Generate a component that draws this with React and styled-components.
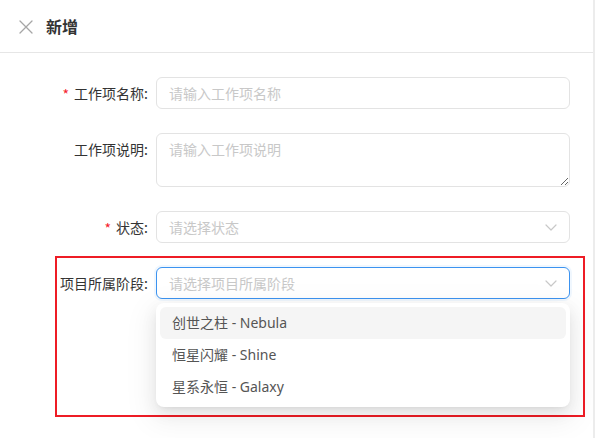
import React from "react";
import styled, { createGlobalStyle, css } from "styled-components";

const GlobalStyle = createGlobalStyle`
  html, body {
    margin: 0;
    padding: 0;
    background: #ffffff;
  }
  body {
    font-family: "Noto Sans", "Noto Sans CJK SC", sans-serif;
    color: #333333;
  }
`;

const phases = [
  { id: "nebula", label: "创世之柱 - Nebula", active: true },
  { id: "shine", label: "恒星闪耀 - Shine" },
  { id: "galaxy", label: "星系永恒 - Galaxy" },
];

const CloseIcon = () => (
  <svg width="14" height="14" viewBox="0 0 14 14" fill="none">
    <path d="M1 1L13 13M13 1L1 13" stroke="#a6a6a6" strokeWidth="1.3" strokeLinecap="round" />
  </svg>
);

const Chevron = () => (
  <svg width="12" height="7" viewBox="0 0 12 7" fill="none">
    <path d="M1 1l5 5 5-5" stroke="#c8c8c8" strokeWidth="1.2" strokeLinecap="round" strokeLinejoin="round" />
  </svg>
);

const App = () => {
  return (
    <>
      <GlobalStyle />
      <Panel>
        <Header>
          <CloseButton>
            <CloseIcon />
          </CloseButton>
          <Title>新增</Title>
        </Header>

        <Form>
          <Row>
            <Label required>工作项名称:</Label>
            <Input placeholder="请输入工作项名称" />
          </Row>
          <Row>
            <Label>工作项说明:</Label>
            <TextArea placeholder="请输入工作项说明" />
          </Row>
          <Row>
            <Label required>状态:</Label>
            <Select>
              <Placeholder>请选择状态</Placeholder>
              <Chevron />
            </Select>
          </Row>
          <Highlighted>
            <Row>
              <Label>项目所属阶段:</Label>
              <SelectWrap>
                <Select focused>
                  <Placeholder>请选择项目所属阶段</Placeholder>
                  <Chevron />
                </Select>
                <Dropdown>
                  {phases.map((p) => (
                    <Option key={p.id} active={p.active}>
                      {p.label}
                    </Option>
                  ))}
                </Dropdown>
              </SelectWrap>
            </Row>
            <Annotation />
          </Highlighted>
        </Form>
      </Panel>
    </>
  );
};

const Panel = styled.div`
  width: 595px;
  height: 438px;
  box-sizing: border-box;
  border-right: 2px solid #ececec;
  background: #ffffff;
  overflow: hidden;
`;

const Header = styled.div`
  box-sizing: border-box;
  height: 53px;
  display: flex;
  align-items: center;
  gap: 13px;
  padding-left: 19px;
  border-bottom: 1px solid #e6e6e6;
`;

const CloseButton = styled.div`
  width: 14px;
  height: 14px;
  display: flex;
  margin-top: 1px;
`;

const Title = styled.div`
  font-family: "Noto Sans CJK SC", sans-serif;
  font-size: 16px;
  line-height: 24px;
  font-weight: 700;
  color: #333333;
`;

const Form = styled.div`
  display: flex;
  flex-direction: column;
  gap: 24px;
  padding: 24px 23px 0 0;
`;

const Row = styled.div`
  display: flex;
  align-items: flex-start;
  gap: 8px;
`;

const Label = styled.label`
  box-sizing: border-box;
  width: 148px;
  height: 32px;
  flex-shrink: 0;
  display: flex;
  align-items: center;
  justify-content: flex-end;
  font-family: "Noto Sans CJK SC", sans-serif;
  font-size: 14px;
  line-height: 20px;
  color: #333333;

  ${(p) =>
    p.required &&
    css`
      &::before {
        content: "*";
        color: #f5222d;
        margin-right: 5px;
        margin-top: 2px;
      }
    `}
`;

const fieldBase = css`
  box-sizing: border-box;
  width: 414px;
  margin: 0;
  border: 1px solid #e3e3e3;
  border-radius: 6px;
  background: #ffffff;
  font-family: "Noto Sans CJK SC", sans-serif;
  font-size: 14px;
  color: #333333;
  outline: none;

  &::placeholder {
    color: #c8c8c8;
  }
`;

const Input = styled.input`
  ${fieldBase};
  display: block;
  height: 32px;
  padding: 0 12px;
`;

const TextArea = styled.textarea`
  ${fieldBase};
  display: block;
  height: 54px;
  padding: 4px 12px;
  line-height: 22px;
  resize: vertical;
`;

const SelectWrap = styled.div`
  position: relative;
  height: 32px;
`;

const Select = styled.div`
  ${fieldBase};
  height: 32px;
  padding: 0 12px;
  display: flex;
  align-items: center;
  justify-content: space-between;

  ${(p) =>
    p.focused &&
    css`
      border-color: #3c93f0;
      box-shadow: 0 0 0 2px rgba(60, 147, 240, 0.08);
    `}
`;

const Placeholder = styled.span`
  color: #c8c8c8;
  line-height: 20px;
`;

const Highlighted = styled.div`
  position: relative;
`;

const Annotation = styled.div`
  position: absolute;
  left: 55px;
  top: -11px;
  width: 530px;
  height: 161px;
  box-sizing: border-box;
  border: 2px solid #ee1c25;
  pointer-events: none;
`;

const Dropdown = styled.div`
  position: absolute;
  top: 36px;
  left: 0;
  width: 414px;
  box-sizing: border-box;
  padding: 4px;
  background: #ffffff;
  border-radius: 8px;
  box-shadow: 0 6px 16px rgba(0, 0, 0, 0.08), 0 3px 6px -4px rgba(0, 0, 0, 0.12),
    0 9px 28px 8px rgba(0, 0, 0, 0.05);
  display: flex;
  flex-direction: column;
  z-index: 1;
`;

const Option = styled.div`
  height: 32px;
  display: flex;
  align-items: center;
  padding: 0 12px;
  border-radius: 6px;
  font-family: "Noto Sans", "Noto Sans CJK SC", sans-serif;
  font-size: 14px;
  line-height: 20px;
  color: #555555;
  background: ${(p) => (p.active ? "#f5f5f5" : "transparent")};
`;

export default App;
